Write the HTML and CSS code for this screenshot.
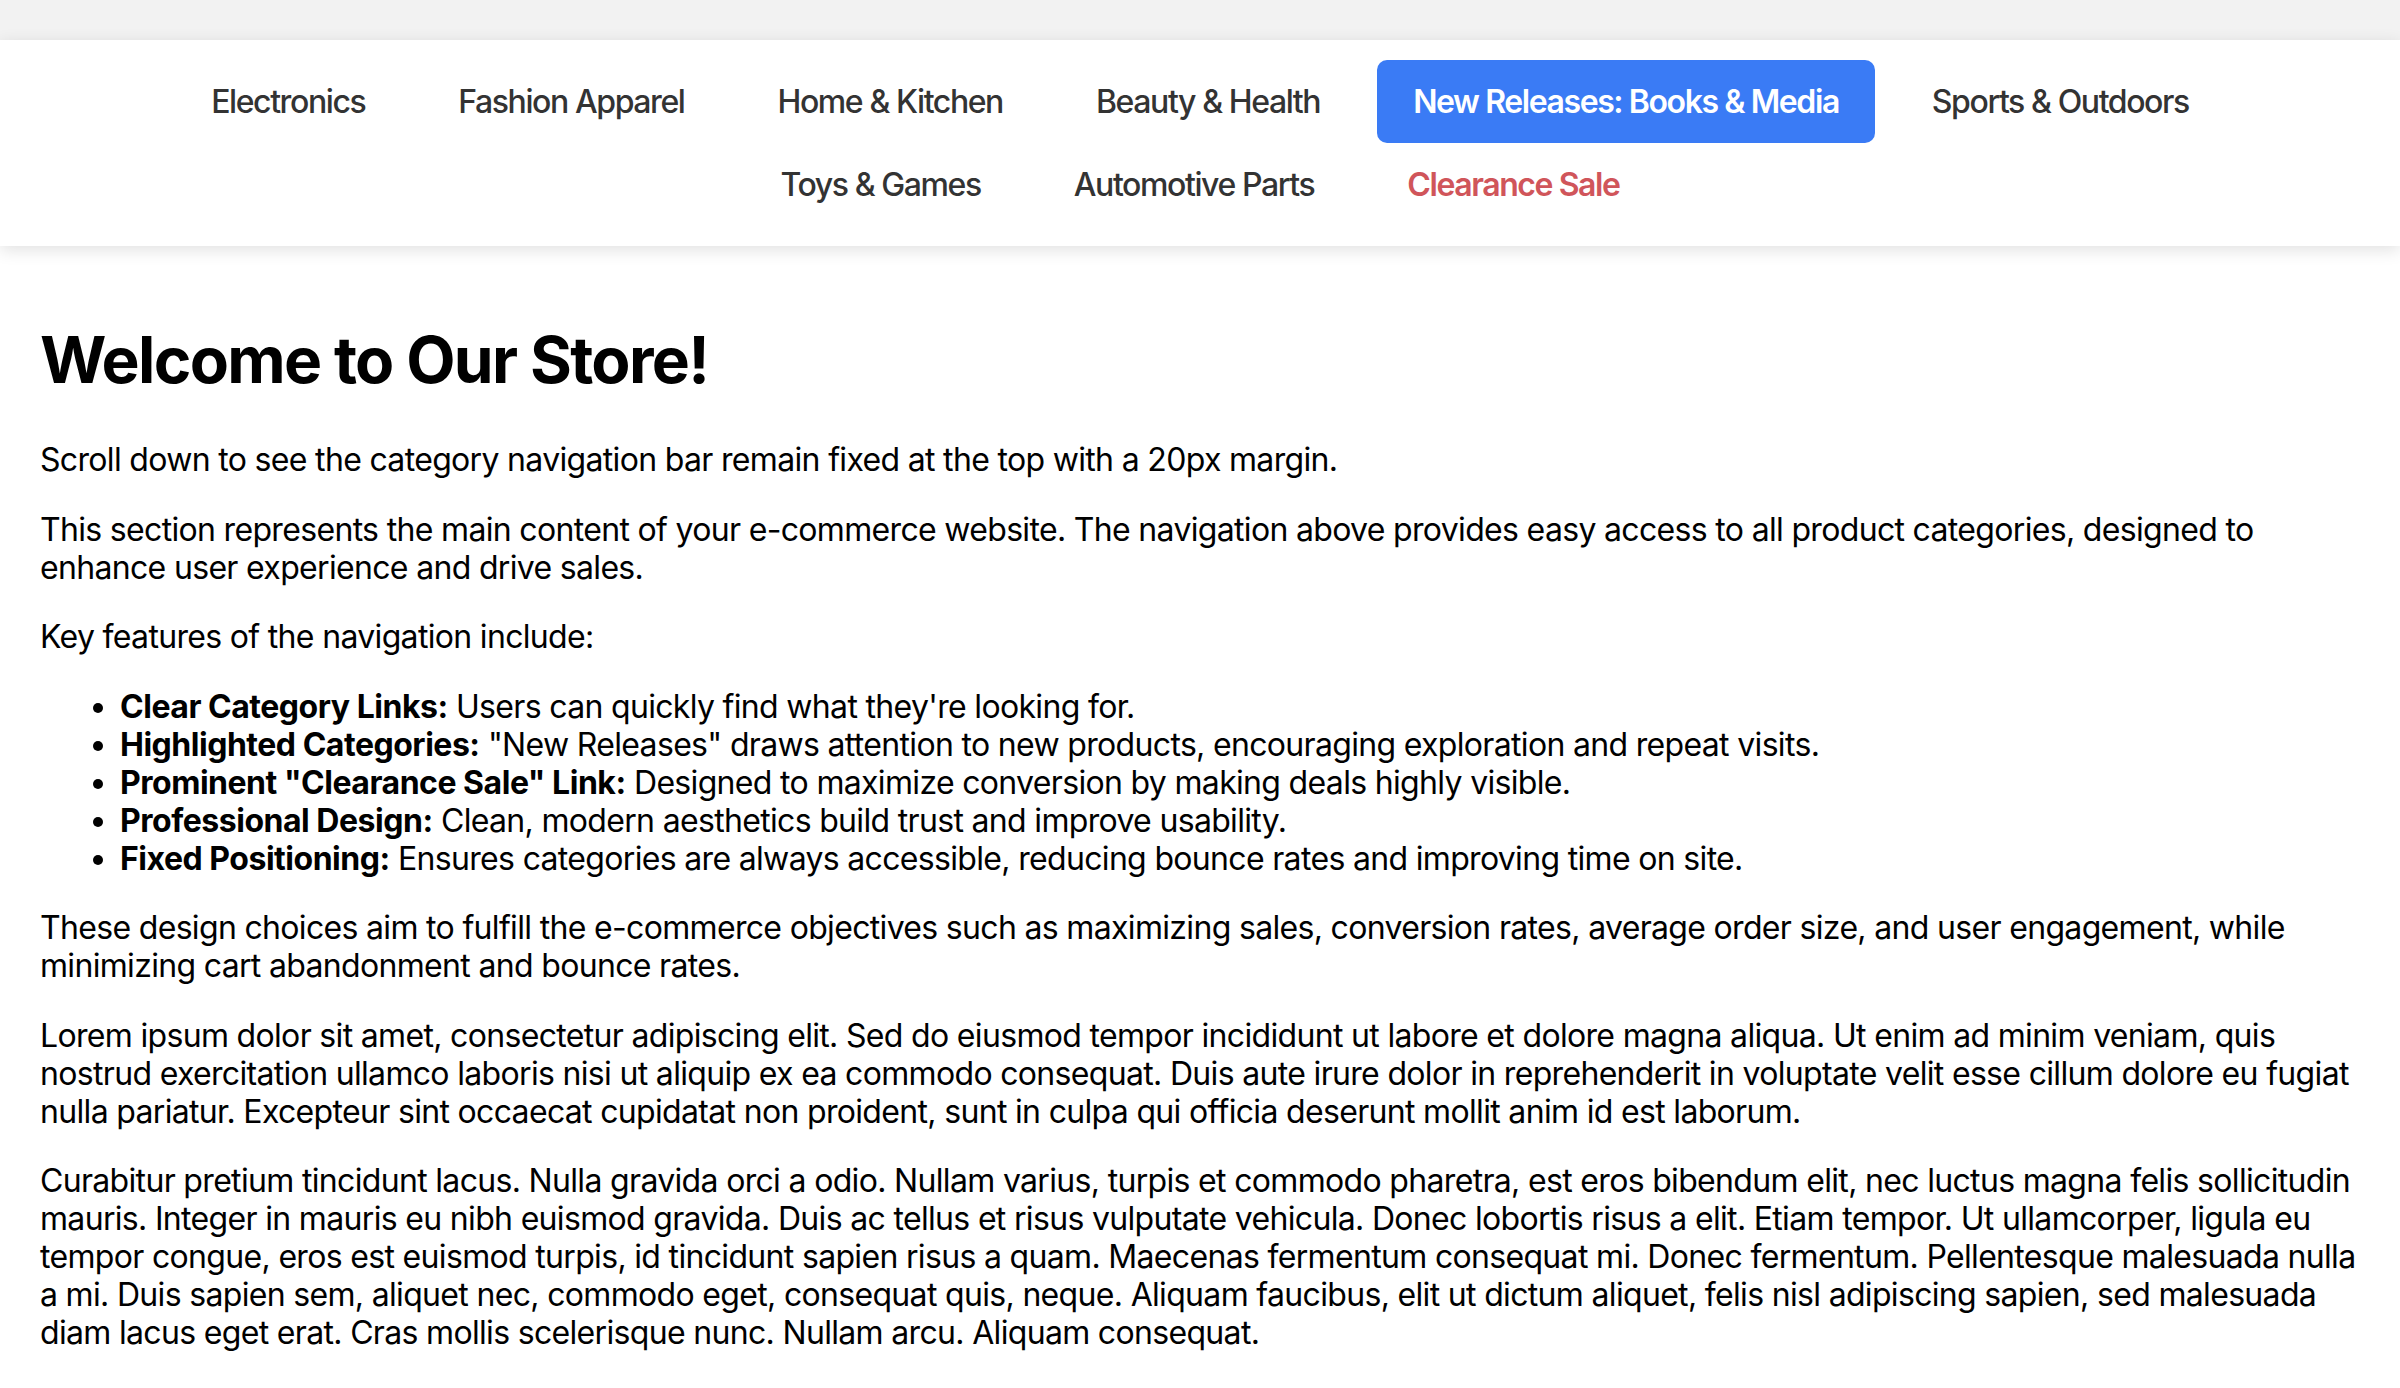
FILE: index.html
```html
<!DOCTYPE html>
<html lang="en">
<head>
<meta charset="utf-8">
<title>Welcome to Our Store</title>
<link rel="stylesheet" href="styles.css">
</head>
<body>
<div class="topbar">
  <nav class="category-nav">
    <a class="nav-link" href="#">Electronics</a>
    <a class="nav-link" href="#">Fashion Apparel</a>
    <a class="nav-link" href="#">Home &amp; Kitchen</a>
    <a class="nav-link" href="#">Beauty &amp; Health</a>
    <a class="nav-link nav-link--highlight" href="#">New Releases: Books &amp; Media</a>
    <a class="nav-link" href="#">Sports &amp; Outdoors</a>
    <a class="nav-link" href="#">Toys &amp; Games</a>
    <a class="nav-link" href="#">Automotive Parts</a>
    <a class="nav-link nav-link--sale" href="#">Clearance Sale</a>
  </nav>
</div>
<main class="content">
  <h1 class="title">Welcome to Our Store!</h1>
  <p>Scroll down to see the category navigation bar remain fixed at the top with a 20px margin.</p>
  <p>This section represents the main content of your e-commerce website. The navigation above provides easy access to all product categories, designed to enhance user experience and drive sales.</p>
  <p>Key features of the navigation include:</p>
  <ul class="features">
    <li><strong>Clear Category Links:</strong> Users can quickly find what they're looking for.</li>
    <li><strong>Highlighted Categories:</strong> "New Releases" draws attention to new products, encouraging exploration and repeat visits.</li>
    <li><strong>Prominent "Clearance Sale" Link:</strong> Designed to maximize conversion by making deals highly visible.</li>
    <li><strong>Professional Design:</strong> Clean, modern aesthetics build trust and improve usability.</li>
    <li><strong>Fixed Positioning:</strong> Ensures categories are always accessible, reducing bounce rates and improving time on site.</li>
  </ul>
  <p>These design choices aim to fulfill the e-commerce objectives such as maximizing sales, conversion rates, average order size, and user engagement, while minimizing cart abandonment and bounce rates.</p>
  <p>Lorem ipsum dolor sit amet, consectetur adipiscing elit. Sed do eiusmod tempor incididunt ut labore et dolore magna aliqua. Ut enim ad minim veniam, quis nostrud exercitation ullamco laboris nisi ut aliquip ex ea commodo consequat. Duis aute irure dolor in reprehenderit in voluptate velit esse cillum dolore eu fugiat nulla pariatur. Excepteur sint occaecat cupidatat non proident, sunt in culpa qui officia deserunt mollit anim id est laborum.</p>
  <p>Curabitur pretium tincidunt lacus. Nulla gravida orci a odio. Nullam varius, turpis et commodo pharetra, est eros bibendum elit, nec luctus magna felis sollicitudin mauris. Integer in mauris eu nibh euismod gravida. Duis ac tellus et risus vulputate vehicula. Donec lobortis risus a elit. Etiam tempor. Ut ullamcorper, ligula eu tempor congue, eros est euismod turpis, id tincidunt sapien risus a quam. Maecenas fermentum consequat mi. Donec fermentum. Pellentesque malesuada nulla a mi. Duis sapien sem, aliquet nec, commodo eget, consequat quis, neque. Aliquam faucibus, elit ut dictum aliquet, felis nisl adipiscing sapien, sed malesuada diam lacus eget erat. Cras mollis scelerisque nunc. Nullam arcu. Aliquam consequat.</p>
</main>
</body>
</html>
```
FILE: styles.css
```css
html, body {
  margin: 0;
  padding: 0;
}

body {
  background: #ffffff;
  color: #000000;
  font-family: Inter, "Liberation Sans", sans-serif;
  font-size: 32px;
  line-height: 38px;
  letter-spacing: -0.021em;
  overflow: hidden;
}

.topbar {
  background: #f2f2f2;
  padding-top: 40px;
}

.category-nav {
  background: #ffffff;
  box-shadow: 0 4px 16px rgba(0, 0, 0, 0.12);
  display: flex;
  flex-wrap: wrap;
  justify-content: center;
  column-gap: 21px;
  padding: 20px 40px;
  position: relative;
}

.nav-link {
  color: #333333;
  text-decoration: none;
  font-weight: 500;
  font-size: 32px;
  line-height: 51px;
  letter-spacing: -0.044em;
  padding: 16px 36px;
  border-radius: 10px;
}

.nav-link--highlight {
  background: #3a7bf5;
  color: #ffffff;
  font-weight: 600;
}

.nav-link--sale {
  color: #d0555a;
  font-weight: 600;
}

.content {
  padding: 33px 40px 0;
}

.title {
  font-size: 64px;
  line-height: 76px;
  font-weight: 700;
  margin: 43px 0;
  letter-spacing: -0.026em;
}

.content p {
  margin: 31.5px 0;
}

.features {
  margin: 31.5px 0;
  padding-left: 80px;
}

.features strong {
  font-weight: 700;
  letter-spacing: -0.015em;
}
```
